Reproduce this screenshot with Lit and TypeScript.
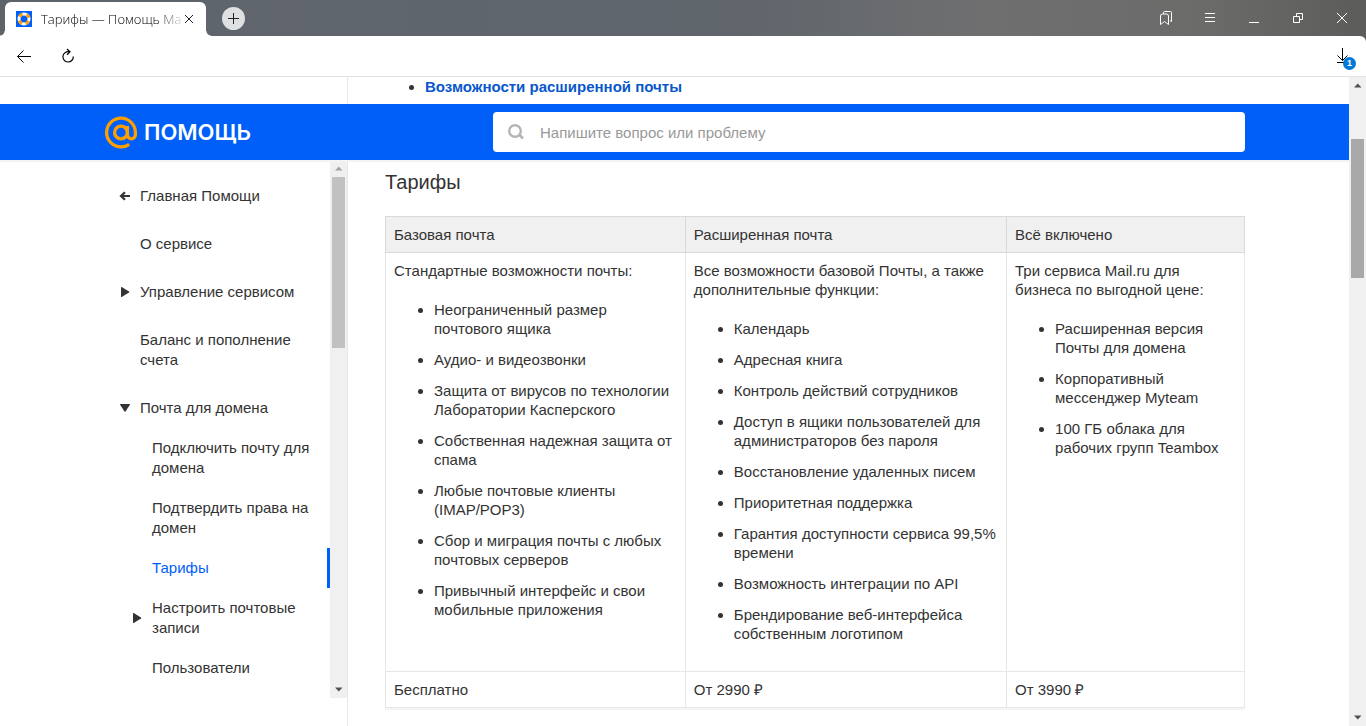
import { LitElement, html, css, svg, nothing } from "lit";
import { customElement, property } from "lit/decorators.js";
import { classMap } from "lit/directives/class-map.js";

interface NavItem {
  label: string;
  icon?: "back" | "closed" | "open";
  active?: boolean;
  children?: NavItem[];
}

interface Plan {
  name: string;
  intro: string;
  features: string[];
  price: string;
}

const NAV: NavItem[] = [
  { label: "Главная Помощи", icon: "back" },
  { label: "О сервисе" },
  { label: "Управление сервисом", icon: "closed" },
  { label: "Баланс и пополнение счета" },
  {
    label: "Почта для домена",
    icon: "open",
    children: [
      { label: "Подключить почту для домена" },
      { label: "Подтвердить права на домен" },
      { label: "Тарифы", active: true },
      { label: "Настроить почтовые записи", icon: "closed" },
      { label: "Пользователи" },
    ],
  },
];

const PLANS: Plan[] = [
  {
    name: "Базовая почта",
    intro: "Стандартные возможности почты:",
    features: [
      "Неограниченный размер почтового ящика",
      "Аудио- и видеозвонки",
      "Защита от вирусов по технологии Лаборатории Касперского",
      "Собственная надежная защита от спама",
      "Любые почтовые клиенты (IMAP/POP3)",
      "Сбор и миграция почты с любых почтовых серверов",
      "Привычный интерфейс и свои мобильные приложения",
    ],
    price: "Бесплатно",
  },
  {
    name: "Расширенная почта",
    intro: "Все возможности базовой Почты, а также дополнительные функции:",
    features: [
      "Календарь",
      "Адресная книга",
      "Контроль действий сотрудников",
      "Доступ в ящики пользователей для администраторов без пароля",
      "Восстановление удаленных писем",
      "Приоритетная поддержка",
      "Гарантия доступности сервиса 99,5% времени",
      "Возможность интеграции по API",
      "Брендирование веб-интерфейса собственным логотипом",
    ],
    price: "От 2990 ₽",
  },
  {
    name: "Всё включено",
    intro: "Три сервиса Mail.ru для бизнеса по выгодной цене:",
    features: [
      "Расширенная версия Почты для домена",
      "Корпоративный мессенджер Myteam",
      "100 ГБ облака для рабочих групп Teambox",
    ],
    price: "От 3990 ₽",
  },
];

const NAV_ICONS = {
  back: svg`<path d="M11 6H2.500M6 2.200L2 6l4 3.800" fill="none" stroke="#333" stroke-width="2.200"/>`,
  closed: svg`<path d="M2 1.500q0-.8.7-.4L10 5.500q.6.500 0 1L2.700 10.900q-.7.400-.7-.4z" fill="#333"/>`,
  open: svg`<path d="M1.500 2h9q.8 0 .4.700L6.500 9.500q-.5.600-1 0L1.100 2.700Q.7 2 1.500 2z" fill="#333"/>`,
};

@customElement("scroll-track")
export class ScrollTrack extends LitElement {
  @property({ type: Number }) before = 0;
  @property({ type: Number }) size = 30;
  @property({ type: Boolean }) dark = false;

  static styles = css`
    :host {
      display: flex;
      flex-direction: column;
      flex: none;
      width: 17px;
      background: #f0f0f0;
    }
    .arrow {
      display: block;
      flex: none;
      width: 17px;
      height: 17px;
    }
    .rail {
      flex: 1;
      display: flex;
      flex-direction: column;
      padding: 0 2px;
    }
    .thumb {
      background: #c1c1c1;
    }
    .thumb.dark {
      background: #a8a8a8;
    }
  `;

  render() {
    return html`
      <svg class="arrow" viewBox="0 0 17 17" aria-hidden="true">
        <path d="M5 10.500h7.500L8.750 6.500z" fill=${this.dark ? "#505050" : "#a3a3a3"} />
      </svg>
      <div class="rail">
        <div style="height:${this.before}%"></div>
        <div class=${classMap({ thumb: true, dark: this.dark })} style="height:${this.size}%"></div>
      </div>
      <svg class="arrow" viewBox="0 0 17 17" aria-hidden="true">
        <path d="M5 6.500h7.500L8.750 10.500z" fill="#505050" />
      </svg>
    `;
  }
}

@customElement("browser-chrome")
export class BrowserChrome extends LitElement {
  static styles = css`
    :host {
      display: block;
      background: linear-gradient(90deg, #5c6469 0, #60656e 20%, #60666c 55%, #6f6f70 72%, #6b6b6a 88%, #5c5c5b 100%);
      font-family: "Open Sans", "Noto Sans", sans-serif;
    }
    button {
      display: flex;
      align-items: center;
      justify-content: center;
      padding: 0;
      border: 0;
      background: none;
      color: inherit;
    }
    svg {
      display: block;
    }
    .tabs {
      display: flex;
      height: 36px;
      padding: 0 2px 0 5px;
    }
    .tab {
      position: relative;
      display: flex;
      align-items: center;
      box-sizing: border-box;
      width: 201px;
      margin-top: 2px;
      padding: 0 9px 0 11px;
      border-radius: 6px 6px 0 0;
      background: #fff;
    }
    .tab::before,
    .tab::after {
      content: "";
      position: absolute;
      bottom: 0;
      width: 5px;
      height: 5px;
    }
    .tab::before {
      right: 100%;
      background: radial-gradient(circle at 0 0, transparent 4px, #fff 5px);
    }
    .tab::after {
      left: 100%;
      background: radial-gradient(circle at 100% 0, transparent 4px, #fff 5px);
    }
    .title {
      flex: 1;
      margin-left: 9px;
      overflow: hidden;
      white-space: nowrap;
      font-size: 13px;
      line-height: 20px;
      font-weight: 300;
      color: #000;
      -webkit-mask-image: linear-gradient(90deg, #000 82%, transparent 104%);
      mask-image: linear-gradient(90deg, #000 82%, transparent 104%);
    }
    .close {
      width: 16px;
      height: 16px;
    }
    .add {
      align-self: center;
      width: 23px;
      height: 23px;
      margin-left: 16px;
      border-radius: 50%;
      background: #dfe0e2;
    }
    .controls {
      display: flex;
      margin-left: auto;
      color: #fff;
    }
    .controls button {
      width: 44px;
    }
    .toolbar {
      display: flex;
      align-items: center;
      height: 40px;
      padding: 0 11px 0 12px;
      border-bottom: 1px solid #e2e2e2;
      border-radius: 0 6px 0 0;
      background: #fff;
    }
    .tool {
      width: 24px;
      height: 24px;
    }
    .reload {
      margin-left: 20px;
    }
    .downloads {
      position: relative;
      margin-left: auto;
    }
    .badge {
      position: absolute;
      right: -1px;
      bottom: -2px;
      width: 13px;
      height: 13px;
      border-radius: 50%;
      background: #0078d7;
      color: #fff;
      font-size: 9px;
      line-height: 13px;
      font-weight: 700;
      text-align: center;
    }
  `;

  render() {
    return html`
      <div class="tabs">
        <div class="tab">
          <svg width="16" height="16" viewBox="0 0 16 16" aria-hidden="true">
            <rect width="16" height="16" fill="#005ff9" />
            <circle cx="8" cy="8" r="5" fill="none" stroke="#fff" stroke-width="3" />
            <circle cx="8" cy="8" r="5" fill="none" stroke="#ff9e00" stroke-width="3"
              stroke-dasharray="3.930 3.924" stroke-dashoffset="-2" />
          </svg>
          <span class="title">Тарифы — Помощь Ma</span>
          <button class="close" aria-label="Закрыть вкладку">
            <svg width="10" height="10" viewBox="0 0 10 10"><path d="M1 1l8 8M9 1L1 9" stroke="#222" fill="none" /></svg>
          </button>
        </div>
        <button class="add" aria-label="Новая вкладка">
          <svg width="13" height="13" viewBox="0 0 13 13"><path d="M6.500 1v11M1 6.500h11" stroke="#222" fill="none" /></svg>
        </button>
        <div class="controls">
          <button aria-label="Закладки">
            <svg width="14" height="16" viewBox="0 0 14 16" fill="none" stroke="currentColor">
              <path d="M1.500 14.500V6a2 2 0 0 1 2-2h4a2 2 0 0 1 2 2v8.500L7.500 13l-2-1.500-2 1.500z" />
              <path d="M4.500 4V2.500a1 1 0 0 1 1-1H11.500a1 1 0 0 1 1 1v9l-1.500-.8" />
            </svg>
          </button>
          <button aria-label="Меню">
            <svg width="10" height="10" viewBox="0 0 10 10"><path d="M0 .5h10M0 4.500h10M0 8.500h10" stroke="currentColor" /></svg>
          </button>
          <button aria-label="Свернуть">
            <svg width="10" height="10" viewBox="0 0 10 10"><path d="M0 9.500h10" stroke="currentColor" /></svg>
          </button>
          <button aria-label="Восстановить">
            <svg width="10" height="10" viewBox="0 0 10 10" fill="none" stroke="currentColor">
              <path d="M.5 3.500h6v6h-6zM3.500 3.500v-3h6v6h-3" />
            </svg>
          </button>
          <button aria-label="Закрыть">
            <svg width="10" height="10" viewBox="0 0 10 10"><path d="M0 0l10 10M10 0L0 10" stroke="currentColor" /></svg>
          </button>
        </div>
      </div>
      <div class="toolbar">
        <button class="tool" aria-label="Назад">
          <svg width="16" height="14" viewBox="0 0 16 14"><path d="M15 7.500H1.500M7.500 1.500l-6 6 6 6" stroke="#000" fill="none" /></svg>
        </button>
        <button class="tool reload" aria-label="Обновить">
          <svg width="14" height="16" viewBox="0 0 14 16" fill="none" stroke="#000" stroke-width="1.200">
            <path d="M12.300 8.500A5.200 5.200 0 1 1 8.500 3.800M6 1l3 2.800-3 2.900" />
          </svg>
        </button>
        <button class="tool downloads" aria-label="Загрузки">
          <svg width="14" height="16" viewBox="0 0 14 16" fill="none" stroke="#000">
            <path d="M6.500 0v12.500M1.500 7.500l5 5 5-5M1 14.500h9" />
          </svg>
          <span class="badge">1</span>
        </button>
      </div>
    `;
  }
}

@customElement("help-nav")
export class HelpNav extends LitElement {
  static styles = css`
    :host {
      display: block;
      flex: 1;
      min-width: 0;
      overflow: hidden;
      padding-top: 8px;
    }
    ul {
      margin: 0;
      padding: 0;
      list-style: none;
    }
    .root {
      margin-top: 8px;
    }
    .link {
      display: flex;
      align-items: center;
      padding: 10px 16px 10px 15px;
      color: #333;
      text-decoration: none;
      font-size: 15px;
      line-height: 20px;
    }
    .sub .link {
      padding-left: 27px;
    }
    .link.active {
      padding-right: 13px;
      border-right: 3px solid #005ff9;
      color: #005ff9;
    }
    .icon {
      flex: none;
      width: 12px;
      height: 12px;
      margin-right: 9px;
    }
  `;

  private item(item: NavItem, root: boolean): unknown {
    return html`
      <li class=${classMap({ root })}>
        <a class=${classMap({ link: true, active: !!item.active })} href="#" aria-current=${item.active ? "page" : nothing}>
          <svg class="icon" viewBox="0 0 12 12" aria-hidden="true">${item.icon ? NAV_ICONS[item.icon] : nothing}</svg>
          <span>${item.label}</span>
        </a>
        ${item.children ? html`<ul class="sub">${item.children.map((c) => this.item(c, false))}</ul>` : nothing}
      </li>
    `;
  }

  render() {
    return html`<nav aria-label="Разделы"><ul>${NAV.map((i) => this.item(i, true))}</ul></nav>`;
  }
}

@customElement("app-root")
export class AppRoot extends LitElement {
  static styles = css`
    :host {
      display: flex;
      flex-direction: column;
      height: 100vh;
      overflow: hidden;
      background: #fff;
      color: #333;
      font-family: "Liberation Sans", Arial, sans-serif;
      font-size: 15px;
      line-height: 19px;
    }
    .viewport {
      flex: 1;
      display: flex;
      min-height: 0;
    }
    .page {
      flex: 1;
      min-width: 0;
      display: flex;
      flex-direction: column;
      overflow: hidden;
    }
    .row {
      display: flex;
      padding: 0 104px;
    }
    .side {
      flex: none;
      box-sizing: border-box;
      width: 244px;
      border-right: 1px solid #e7e7e7;
    }
    .main {
      flex: 1;
      min-width: 0;
      margin-left: 37px;
    }
    .previous {
      height: 27px;
    }
    .previous ul {
      margin: 0;
    }
    .anchor {
      color: #0857cb;
      font-weight: 700;
      text-decoration: none;
    }
    .header {
      flex: none;
      display: flex;
      align-items: center;
      height: 56px;
      padding: 0 104px;
      background: #005ff9;
      box-shadow: 0 2px 0 #f4f4f4;
      z-index: 1;
    }
    .logo {
      display: flex;
      align-items: center;
      gap: 7px;
      width: 389px;
      color: #fff;
      font-family: Inter, sans-serif;
      font-size: 22px;
      line-height: 32px;
      font-weight: 600;
      text-decoration: none;
    }
    .search {
      flex: 1;
      display: flex;
      align-items: center;
      height: 40px;
      padding: 0 15px;
      border-radius: 4px;
      background: #fff;
    }
    .search input {
      flex: 1;
      min-width: 0;
      margin-left: 16px;
      padding: 0;
      border: 0;
      outline: 0;
      background: none;
      color: #333;
      font: inherit;
    }
    .search input::placeholder {
      color: #999;
      opacity: 1;
    }
    .body {
      flex: 1;
      min-height: 0;
    }
    .body .side {
      padding-bottom: 28px;
      display: flex;
    }
    h2 {
      margin: 10px 0 22px;
      font-size: 20px;
      line-height: 24px;
      font-weight: 400;
    }
    table {
      width: 100%;
      border-collapse: collapse;
      table-layout: fixed;
      box-shadow: 0 2px 0 #f4f4f4;
    }
    .basic {
      width: 34.9%;
    }
    .extended {
      width: 37.4%;
    }
    th,
    td {
      padding: 8px;
      border: 1px solid #e7e7e7;
      text-align: left;
      vertical-align: top;
      font-weight: 400;
    }
    th {
      border-color: #d9d9d9;
      background: #f0f0f0;
    }
    p {
      margin: 0;
    }
    td ul {
      margin: 20px 0;
      padding-left: 40px;
    }
    td li + li {
      margin-top: 12px;
    }
  `;

  render() {
    return html`
      <browser-chrome></browser-chrome>
      <div class="viewport">
        <div class="page">
          <div class="row previous">
            <div class="side"></div>
            <div class="main">
              <ul>
                <li><a class="anchor" href="#">Возможности расширенной почты</a></li>
              </ul>
            </div>
          </div>
          <header class="header">
            <a class="logo" href="#">
              <svg width="33" height="33" viewBox="0 0 33 33" fill="none" stroke="#ff9e00" stroke-width="3.300" aria-hidden="true">
                <circle cx="17" cy="16.500" r="6.400" />
                <path d="M23.400 10v8.800a4 4 0 0 0 8 0V16.500A14.400 14.400 0 1 0 17 30.900a14.400 14.400 0 0 0 8.200-2.600" />
              </svg>
              <span>ПОМОЩЬ</span>
            </a>
            <label class="search">
              <svg width="16" height="16" viewBox="0 0 16 16" fill="none" stroke="#b5b5b5" aria-hidden="true">
                <circle cx="7" cy="7" r="5.800" stroke-width="2.400" />
                <path d="M11 10.500l4 4" stroke-width="2.600" />
              </svg>
              <input type="text" placeholder="Напишите вопрос или проблему" aria-label="Поиск по Помощи" />
            </label>
          </header>
          <div class="row body">
            <aside class="side">
              <help-nav></help-nav>
              <scroll-track .before=${0} .size=${34}></scroll-track>
            </aside>
            <main class="main">
              <h2>Тарифы</h2>
              <table>
                <colgroup>
                  <col class="basic" />
                  <col class="extended" />
                  <col />
                </colgroup>
                <thead>
                  <tr>${PLANS.map((p) => html`<th scope="col">${p.name}</th>`)}</tr>
                </thead>
                <tbody>
                  <tr>
                    ${PLANS.map(
                      (p) => html`<td>
                        <p>${p.intro}</p>
                        <ul>${p.features.map((f) => html`<li>${f}</li>`)}</ul>
                      </td>`
                    )}
                  </tr>
                  <tr>${PLANS.map((p) => html`<td>${p.price}</td>`)}</tr>
                </tbody>
              </table>
            </main>
          </div>
        </div>
        <scroll-track dark .before=${7.3} .size=${22.6}></scroll-track>
      </div>
    `;
  }
}
